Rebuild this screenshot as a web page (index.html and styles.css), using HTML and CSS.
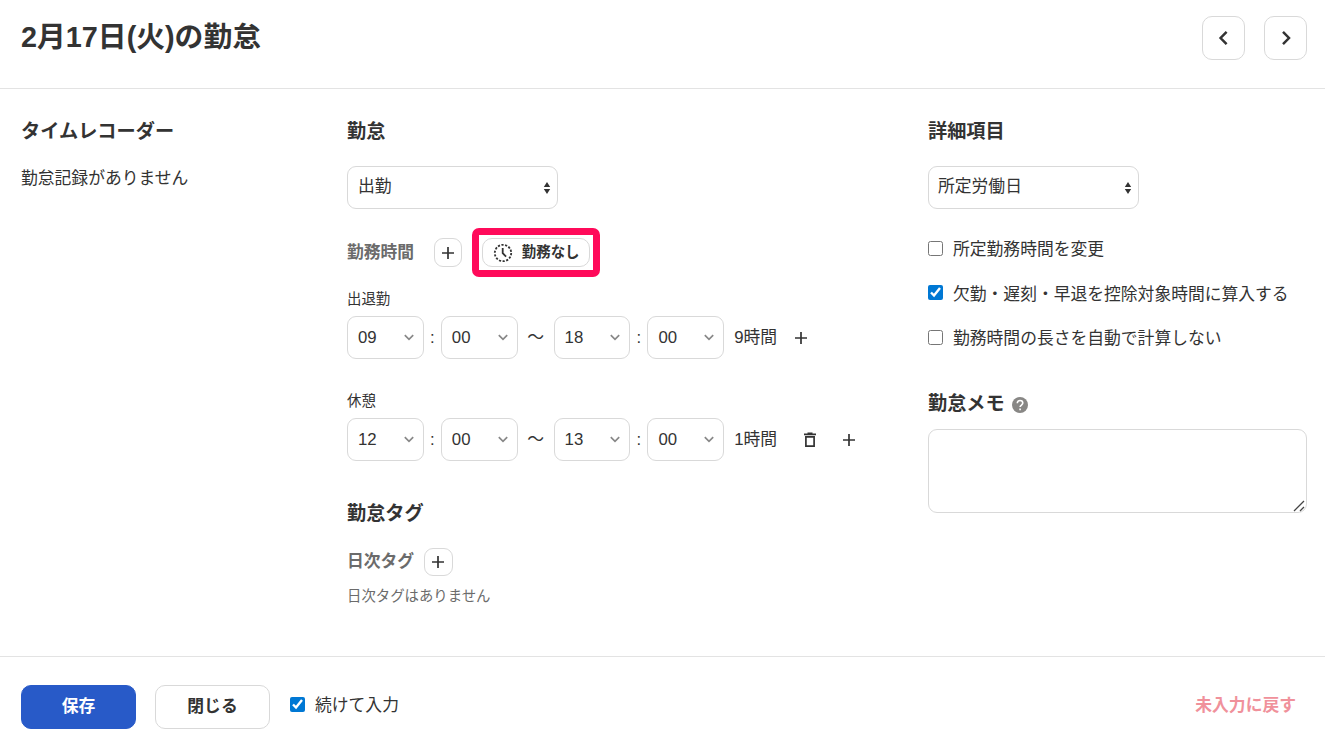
FILE: index.html
```
<!DOCTYPE html>
<html lang="ja">
<head>
    <meta charset="UTF-8">
    <meta name="viewport" content="width=device-width, initial-scale=1.0">
    <title>2月17日(火)の勤怠</title>
    <link rel="stylesheet" href="styles.css">
</head>
<body>

    <svg class="sprite">
        <symbol id="plus" viewBox="0 0 14 14"><path d="M7 1v12M1 7h12" fill="none" stroke="currentColor" stroke-width="1.7"/></symbol>
        <symbol id="down" viewBox="0 0 10 7"><path d="M.8 1.2L5 5.3l4.2-4.1" fill="none" stroke="currentColor" stroke-width="1.7"/></symbol>
        <symbol id="updown" viewBox="0 0 8 14"><path d="M4 1l3.2 5H.8zM4 13L.8 8h6.4z" fill="currentColor"/></symbol>
    </svg>

    <header class="header">
        <h1>2月17日(火)の勤怠</h1>
        <nav class="pager">
            <button class="btn pager-btn" aria-label="前の日"><svg width="12" height="16" viewBox="0 0 12 16"><path d="M8.6 1.8L2.6 8l6 6.2" fill="none" stroke="currentColor" stroke-width="2.5"/></svg></button>
            <button class="btn pager-btn" aria-label="次の日"><svg width="12" height="16" viewBox="0 0 12 16"><path d="M3 1.8L9 8l-6 6.2" fill="none" stroke="currentColor" stroke-width="2.5"/></svg></button>
        </nav>
    </header>

    <main class="main">
        <section>
            <h2>タイムレコーダー</h2>
            <p class="empty">勤怠記録がありません</p>
        </section>

        <section>
            <h2>勤怠</h2>
            <div class="select select-wide">出勤<svg width="8" height="14"><use href="#updown"/></svg></div>

            <div class="sub-row work-row">
                <h3>勤務時間</h3>
                <button class="btn add-btn work-add" aria-label="追加"><svg width="14" height="14"><use href="#plus"/></svg></button>
                <div class="highlight">
                    <button class="btn no-work">
                        <svg width="20" height="20" viewBox="0 0 20 20" fill="none" stroke="currentColor">
                            <circle cx="10" cy="10" r="8.2" stroke-width="1.8" stroke-dasharray="2.2 1.48"/>
                            <path d="M9.7 5v5.2l3.4 3.5" stroke-width="1.8"/>
                        </svg>
                        <span>勤務なし</span>
                    </button>
                </div>
            </div>

            <p class="label">出退勤</p>
            <div class="time-row">
                <div class="select">09<svg width="10" height="7"><use href="#down"/></svg></div>
                <span class="colon">:</span>
                <div class="select">00<svg width="10" height="7"><use href="#down"/></svg></div>
                <span class="wave">～</span>
                <div class="select">18<svg width="10" height="7"><use href="#down"/></svg></div>
                <span class="colon">:</span>
                <div class="select">00<svg width="10" height="7"><use href="#down"/></svg></div>
                <span class="total">9時間</span>
                <svg class="row-plus" width="14" height="14"><use href="#plus"/></svg>
            </div>

            <p class="label rest-label">休憩</p>
            <div class="time-row">
                <div class="select">12<svg width="10" height="7"><use href="#down"/></svg></div>
                <span class="colon">:</span>
                <div class="select">00<svg width="10" height="7"><use href="#down"/></svg></div>
                <span class="wave">～</span>
                <div class="select">13<svg width="10" height="7"><use href="#down"/></svg></div>
                <span class="colon">:</span>
                <div class="select">00<svg width="10" height="7"><use href="#down"/></svg></div>
                <span class="total">1時間</span>
                <svg class="trash" width="12" height="16" viewBox="0 0 12 16"><path d="M0 2.4h12M3.5 1.4h5M1.9 4.9v9.2h8.2V4.9z" fill="none" stroke="currentColor" stroke-width="1.7"/></svg>
                <svg class="row-plus after-trash" width="14" height="14"><use href="#plus"/></svg>
            </div>

            <h2 class="tag-title">勤怠タグ</h2>
            <div class="sub-row tag-row">
                <h3>日次タグ</h3>
                <button class="btn add-btn tag-add" aria-label="追加"><svg width="14" height="14"><use href="#plus"/></svg></button>
            </div>
            <p class="note">日次タグはありません</p>
        </section>

        <section>
            <h2>詳細項目</h2>
            <div class="select select-wide day-type">所定労働日<svg width="8" height="14"><use href="#updown"/></svg></div>

            <div class="checks">
                <label class="check"><input type="checkbox"><span>所定勤務時間を変更</span></label>
                <label class="check"><input type="checkbox" checked><span>欠勤・遅刻・早退を控除対象時間に算入する</span></label>
                <label class="check"><input type="checkbox"><span>勤務時間の長さを自動で計算しない</span></label>
            </div>

            <h2 class="memo-title">勤怠メモ
                <svg width="16" height="16" viewBox="0 0 16 16"><circle cx="8" cy="8" r="8" fill="#888785"/><path d="M5.3 6.3c0-3.8 5.5-3.5 5.5-.2 0 1.9-2.7 2-2.7 4M8.1 11.4v1.8" fill="none" stroke="#fff" stroke-width="1.6"/></svg>
            </h2>
            <div class="memo">
                <textarea aria-label="勤怠メモ"></textarea>
                <svg class="grip" width="12" height="12" viewBox="0 0 12 12"><path d="M1 11L11 1M7 11l4-4" stroke="#444" stroke-width="1.3"/></svg>
            </div>
        </section>
    </main>

    <footer class="footer">
        <button class="btn action save">保存</button>
        <button class="btn action">閉じる</button>
        <label class="check continue"><input type="checkbox" checked><span>続けて入力</span></label>
        <a class="reset">未入力に戻す</a>
    </footer>

</body>
</html>
```
FILE: styles.css
```
* {
    box-sizing: border-box;
}

body {
    margin: 0;
    height: 748px;
    display: flex;
    flex-direction: column;
    background: #fff;
    color: #333;
    font-family: "Liberation Sans", "Noto Sans CJK JP", sans-serif;
    font-size: 16.8px;
    line-height: 24px;
    overflow: hidden;
}

h1, h2, h3, p {
    margin: 0;
}

svg {
    flex: none;
    display: block;
}

.sprite {
    position: absolute;
    width: 0;
    height: 0;
}

/* Header */
.header {
    height: 89px;
    padding: 16px 18px 0 21px;
    display: flex;
    justify-content: space-between;
    border-bottom: 1px solid #e3e3e3;
}

h1 {
    font-size: 28.8px;
    line-height: 42px;
}

.pager {
    display: flex;
    gap: 19px;
}

.btn {
    display: flex;
    align-items: center;
    justify-content: center;
    padding: 0;
    border: 1px solid #d9d9d9;
    border-radius: 10px;
    background: #fff;
    color: #333;
    font-family: inherit;
    font-weight: bold;
}

.pager-btn {
    width: 43px;
    height: 44px;
}

/* Columns */
.main {
    flex: 1;
    display: grid;
    grid-template-columns: 326px 581px 379px;
    padding: 28px 18px 0 21px;
}

h2 {
    height: 29px;
    margin-bottom: 20px;
    font-size: 19.2px;
    line-height: 29px;
}

h3 {
    color: #6b6b6b;
    font-size: 16.8px;
}

.empty {
    padding-top: 1px;
}

.select {
    width: 76.8px;
    height: 43px;
    padding: 0 9px 0 10px;
    display: flex;
    align-items: center;
    justify-content: space-between;
    border: 1px solid #d9d9d9;
    border-radius: 9px;
}

.select svg {
    color: #888;
}

.select-wide {
    width: 211px;
    padding: 0 6px 2px 10px;
}

.select-wide svg {
    margin-top: 2px;
    color: #333;
}

.day-type {
    padding-left: 9px;
}

.sub-row {
    display: flex;
    align-items: center;
}

.work-row {
    height: 29px;
    margin-top: 29px;
}

.add-btn {
    width: 28px;
    height: 29px;
    border-radius: 9px;
}

.work-add {
    margin-left: 20px;
}

.highlight {
    position: relative;
    margin-left: 20px;
}

/* Red frame round the button */
.highlight::after {
    content: "";
    position: absolute;
    inset: -10px;
    border: 7px solid #ff0a5a;
    border-radius: 7px;
    pointer-events: none;
}

.no-work {
    width: 108px;
    height: 29px;
    gap: 9px;
    font-size: 14.4px;
}

.no-work span {
    padding-bottom: 4px;
}

.label {
    height: 20px;
    margin: 22px 0 7px;
    font-size: 14.4px;
    line-height: 20px;
}

.rest-label {
    margin-top: 32px;
}

.time-row {
    display: flex;
    align-items: center;
}

.colon {
    width: 17px;
    text-align: center;
}

.wave {
    width: 36px;
    text-align: center;
}

.total {
    width: 43px;
    margin-left: 10px;
}

.row-plus {
    margin-left: 17px;
}

.trash {
    margin-left: 27px;
}

.after-trash {
    margin-left: 26px;
}

.tag-title {
    margin: 38px 0 20px;
}

.tag-add {
    width: 29px;
    height: 28px;
    margin-left: 10px;
    padding-right: 1px;
}

.note {
    margin-top: 10px;
    color: #6b6b6b;
    font-size: 14.4px;
    line-height: 20px;
}

.checks {
    display: flex;
    flex-direction: column;
    gap: 20.5px;
    margin-top: 28px;
}

.check {
    display: flex;
    align-items: center;
    gap: 10px;
}

.check input {
    width: 15px;
    height: 15px;
    margin: 0 0 2px;
    accent-color: #0078d4;
}

.check span {
    padding-top: 2px;
}

.checks .check {
    height: 24px;
}

.memo-title {
    display: flex;
    align-items: center;
    gap: 7px;
    margin: 39px 0 11px;
}

.memo-title svg {
    margin-top: 2px;
}

.memo {
    position: relative;
    height: 84px;
}

.memo textarea {
    display: block;
    width: 100%;
    height: 100%;
    padding: 10px;
    border: 1px solid #d9d9d9;
    border-radius: 9px;
    resize: none;
}

.grip {
    position: absolute;
    right: 2px;
    bottom: 1px;
}

/* Footer */
.footer {
    height: 92px;
    padding: 28px 29px 0 21px;
    display: flex;
    align-items: flex-start;
    border-top: 1px solid #e3e3e3;
}

.action {
    width: 115px;
    height: 44px;
    margin-right: 19px;
    padding-bottom: 4px;
    font-size: 16.8px;
}

.save {
    border-color: #285ac8;
    background: #285ac8;
    color: #fff;
}

.continue {
    height: 40px;
    margin-left: 1px;
}

.reset {
    margin-left: auto;
    color: #f0919b;
    font-weight: bold;
    line-height: 42px;
}
```
